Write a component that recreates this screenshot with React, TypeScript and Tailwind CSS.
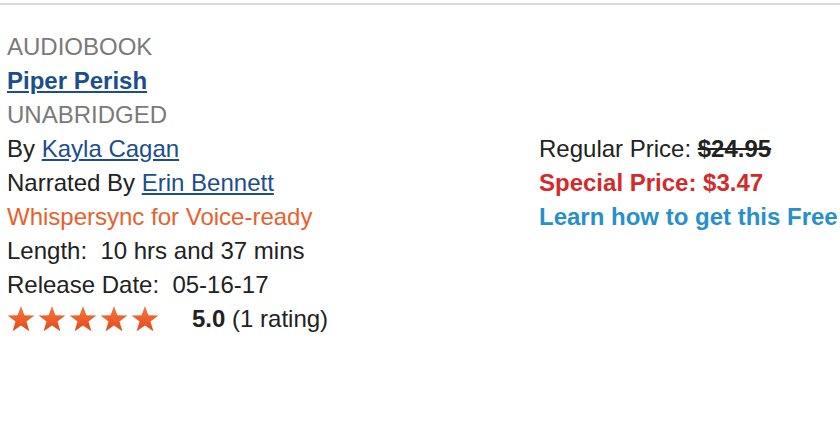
import React from 'react';

const Star = () => (
  <svg width="30" height="28" viewBox="0 0 24 23" className="shrink-0">
    <defs>
      <linearGradient id="starGrad" x1="0" y1="0" x2="0" y2="1">
        <stop offset="0%" stopColor="#f47a3c" />
        <stop offset="100%" stopColor="#e5461c" />
      </linearGradient>
    </defs>
    <polygon
      points="12,0.8 14.8,8.4 23,8.6 16.5,13.6 18.9,21.6 12,16.9 5.1,21.6 7.5,13.6 1,8.6 9.2,8.4"
      fill="url(#starGrad)"
    />
  </svg>
);

export default function App() {
  return (
    <div className="w-[840px] h-[440px] overflow-hidden bg-white font-['Liberation_Sans',Arial,sans-serif] text-[24px] leading-[34px] text-[#222]">
      <div className="mt-[3px] border-t-2 border-[#dcdcdc]" />
      <div className="flex pt-[25px] pl-[7px]">
        {/* Left column: book details */}
        <div className="w-[532px] shrink-0">
          <div className="text-[#7a7a7a]">AUDIOBOOK</div>
          <div>
            <a href="#" className="font-bold text-[#1c4e8e] underline underline-offset-2">
              Piper Perish
            </a>
          </div>
          <div className="text-[#7a7a7a]">UNABRIDGED</div>
          <div>
            By{' '}
            <a href="#" className="text-[#1c4e8e] underline underline-offset-2">
              Kayla Cagan
            </a>
          </div>
          <div>
            Narrated By{' '}
            <a href="#" className="text-[#1c4e8e] underline underline-offset-2">
              Erin Bennett
            </a>
          </div>
          <div className="text-[#e8612c]">Whispersync for Voice-ready</div>
          <div className="whitespace-pre">Length:  10 hrs and 37 mins</div>
          <div className="whitespace-pre">Release Date:  05-16-17</div>
          <div className="flex items-center">
            <div className="flex gap-[1px] -ml-[1px]">
              <Star />
              <Star />
              <Star />
              <Star />
              <Star />
            </div>
            <span className="ml-[32px]">
              <b>5.0</b> (1 rating)
            </span>
          </div>
        </div>

        {/* Right column: pricing */}
        <div className="pt-[102px] whitespace-nowrap">
          <div>
            Regular Price: <b className="line-through">$24.95</b>
          </div>
          <div className="font-bold text-[#d42a2a]">Special Price: $3.47</div>
          <div>
            <a href="#" className="font-bold text-[#2690ca]">
              Learn how to get this Free!
            </a>
          </div>
        </div>
      </div>
    </div>
  );
}
